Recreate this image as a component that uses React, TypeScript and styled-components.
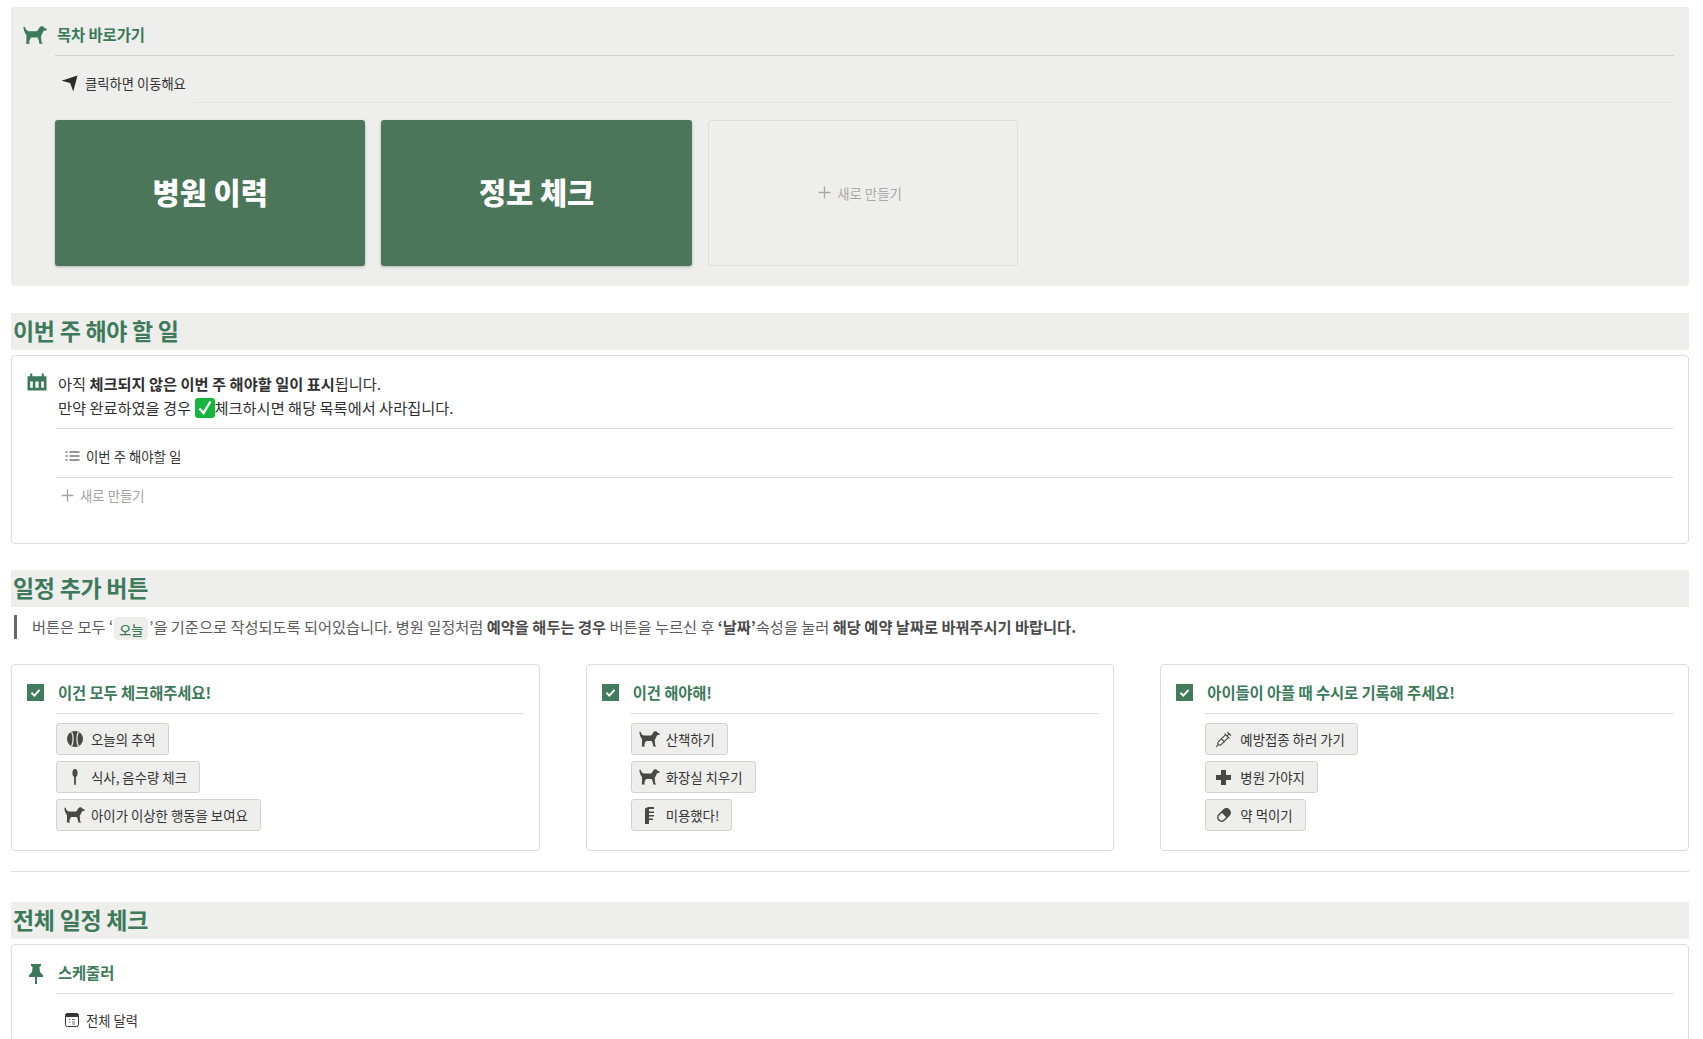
import styled, { createGlobalStyle } from "styled-components";
import { Syringe } from "lucide-react";

const GREEN = "#3c7a5a";
const PANEL = "#eeeeec";
const LINE = "#dcdcda";

const GlobalStyle = createGlobalStyle`
  html, body {
    margin: 0;
    padding: 0;
    background: #fff;
    font-family: "Noto Sans CJK KR", "Noto Sans", sans-serif;
    color: #2f2f2f;
  }
`;

const Page = styled.div`
  height: 1039px;
  overflow: hidden;
  padding: 7px 14px 0 11px;
  box-sizing: border-box;
`;

const TopPanel = styled.section`
  display: flex;
  height: 279px;
  box-sizing: border-box;
  padding: 10px 15px 20px 12px;
  background: ${PANEL};
  border-radius: 3px;
`;

const IconCol = styled.div<{ $top: number; $width?: number; $left?: number }>`
  flex: 0 0 ${(p) => p.$width ?? 29}px;
  display: flex;
  justify-content: flex-start;
  padding-top: ${(p) => p.$top}px;
  padding-left: ${(p) => p.$left ?? 0}px;
  box-sizing: border-box;
  color: ${GREEN};
`;

const Body = styled.div`
  flex: 1;
  min-width: 0;
  display: flex;
  flex-direction: column;
`;

const BlockTitle = styled.div`
  height: 39px;
  display: flex;
  align-items: center;
  flex: none;
  box-sizing: border-box;
  padding: 0 0 5px 2px;
  border-bottom: 1px solid #d0d0ce;
  color: ${GREEN};
  font-size: 15.4px;
  font-weight: 700;
  letter-spacing: -0.1px;
`;

const ViewRow = styled.div<{ $rule?: number; $inset: number; $top: number }>`
  height: 47px;
  box-sizing: border-box;
  display: flex;
  align-items: center;
  gap: 7px;
  padding: ${(p) => p.$top}px 0 0 ${(p) => p.$inset}px;
  font-size: 13.3px;
  color: #333;
  position: relative;
  flex: none;

  &::after {
    content: "";
    display: ${(p) => (p.$rule === undefined ? "none" : "block")};
    position: absolute;
    left: ${(p) => p.$rule ?? 0}px;
    right: 0;
    bottom: 0;
    height: 1px;
    background: #e4e4e2;
  }
`;

const LinkGrid = styled.div`
  display: grid;
  grid-template-columns: repeat(3, 310.4px);
  gap: 16px;
  margin-top: 17px;
  height: 146px;
`;

const LinkCard = styled.div`
  display: flex;
  align-items: center;
  justify-content: center;
  padding-bottom: 5px;
  background: #4c7659;
  border-radius: 3px;
  box-shadow: 0 1px 3px rgba(0, 0, 0, 0.25);
  color: #fff;
  font-size: 29.5px;
  font-weight: 900;
`;

const NewCard = styled.div`
  display: flex;
  align-items: center;
  justify-content: center;
  gap: 6px;
  padding: 0 6px 1px 0;
  border: 1px solid #dddddb;
  border-radius: 3px;
  color: #a9a9a7;
  font-size: 13.4px;
`;

const Heading = styled.h2<{ $top: number }>`
  margin: ${(p) => p.$top}px 0 0;
  height: 37px;
  line-height: 34px;
  padding-left: 2px;
  background: ${PANEL};
  color: ${GREEN};
  font-size: 23px;
  font-weight: 700;
  letter-spacing: -0.3px;
`;

const Box = styled.section<{ $height: number }>`
  display: flex;
  height: ${(p) => p.$height}px;
  margin-top: 5px;
  box-sizing: border-box;
  padding: 15px 15px 0;
  border: 1px solid ${LINE};
  border-radius: 4px;
`;

const Note = styled.p`
  margin: 0 0 0 2px;
  height: 57px;
  font-size: 15.25px;
  line-height: 24px;
  color: #2f2f2f;

  strong {
    font-weight: 700;
  }
`;

const NoteRule = styled.div`
  border-top: 1px solid ${LINE};
`;

const TableRow = styled.div`
  height: 49px;
  display: flex;
  align-items: center;
  gap: 6px;
  padding: 6px 0 0 9px;
  border-bottom: 1px solid ${LINE};
  box-sizing: border-box;
  font-size: 13.4px;
  color: #333;
`;

const AddRow = styled.div`
  height: 34px;
  display: flex;
  align-items: center;
  gap: 6px;
  padding-left: 5px;
  color: #a3a3a1;
  font-size: 13.4px;
`;

const Quote = styled.blockquote`
  margin: 8px 0 0 3px;
  height: 24px;
  box-sizing: border-box;
  padding: 0 0 2px 15px;
  border-left: 3px solid #666;
  display: flex;
  align-items: center;
  font-size: 15.25px;
  color: #5b5b5b;
  white-space: pre;

  strong {
    font-weight: 700;
    color: #4a4a4a;
  }
`;

const Chip = styled.span`
  display: inline-block;
  margin: 0 1px;
  padding: 2px 5px 0;
  height: 21px;
  line-height: 21px;
  background: ${PANEL};
  border-radius: 4px;
  color: ${GREEN};
  font-size: 13px;
  font-weight: 500;
  position: relative;
  top: 2px;
`;

const CalloutGrid = styled.div`
  display: grid;
  grid-template-columns: repeat(3, 1fr);
  gap: 46px;
  margin-top: 25px;
`;

const Callout = styled.div`
  display: flex;
  height: 187px;
  box-sizing: border-box;
  padding: 7px 15px 0;
  border: 1px solid ${LINE};
  border-radius: 4px;
`;

const CalloutTitle = styled(BlockTitle)`
  height: 42px;
  padding-bottom: 1px;
  border-color: ${LINE};
`;

const SchedulerTitle = styled(BlockTitle)`
  height: 41px;
  margin-top: -7px;
  padding-bottom: 3px;
  border-color: ${LINE};
`;

const Buttons = styled.div`
  display: flex;
  flex-direction: column;
  align-items: flex-start;
  gap: 6px;
  margin-top: 9px;
`;

const ActionButton = styled.div`
  height: 32px;
  box-sizing: border-box;
  display: flex;
  align-items: center;
  gap: 7px;
  padding: 0 12px 0 8px;
  background: ${PANEL};
  border: 1px solid #d2d2d0;
  border-radius: 3px;
  color: #333;
  font-size: 13.4px;
  white-space: nowrap;
`;

const IconSlot = styled.span`
  flex: 0 0 19px;
  width: 19px;
  min-width: 0;
  height: 20px;
  display: flex;
  align-items: center;
  justify-content: center;
  color: #484848;

  svg {
    flex: none;
  }
`;

const Rule = styled.hr`
  margin: 20px 0 0;
  border: none;
  border-top: 1px solid ${LINE};
`;

const EmojiSvg = styled.svg`
  vertical-align: -4px;
`;

const DOG =
  "M0.4 0.8L1.8 0.8C2.4 3 3.4 4.6 5.6 5.2L13.6 5.2C15 4.6 15.6 2.6 16.6 1.2C17.4 0.2 19 -0.1 20 0.6L21 1.6L23.8 3L23.4 4.4L20.8 4.8C19.8 6.4 19.2 8.4 18 10L18.4 15.6L19.8 17.8L16.4 17.8L15.8 14.6L14.6 11.4L8 11.4L6.4 14.6L6.2 16.2L7 17.8L3 17.8L3.4 15.6L3.4 9.2C1.6 7 0.6 4 0.4 0.8Z";

function Dog({ size = 21 }: { size?: number }) {
  return (
    <svg width={size} height={(size * 18) / 24} viewBox="0 0 24 18" fill="currentColor">
      <path d={DOG} />
    </svg>
  );
}

function Arrow() {
  return (
    <svg width="17" height="17" viewBox="0 0 16 16" fill="#2b2b2b">
      <path d="M15.5 0.5L11.5 15.5L8.6 7.5L0.5 5.5Z" />
    </svg>
  );
}

function Plus({ size = 13 }: { size?: number }) {
  return (
    <svg width={size} height={size} viewBox="0 0 12 12" stroke="currentColor" strokeWidth="1.2">
      <path d="M6 0.5V11.5M0.5 6H11.5" />
    </svg>
  );
}

function CalendarSolid() {
  return (
    <svg width="20" height="18" viewBox="0 0 19 17">
      <path
        fill={GREEN}
        d="M0.5 3H3V0.5H5V3H14V0.5H16V3H18.5V16.5H0.5ZM3 8V14H5.5V8ZM8 8V14H11V8ZM13.5 8V14H16V8Z"
        fillRule="evenodd"
      />
    </svg>
  );
}

function CheckSquare() {
  return (
    <svg width="17" height="17" viewBox="0 0 17 17">
      <rect width="17" height="17" fill="#427c5c" />
      <path d="M4.5 8.8L7.4 11.6L12.5 5.8" fill="none" stroke="#fff" strokeWidth="1.9" />
    </svg>
  );
}

function EmojiCheck() {
  return (
    <EmojiSvg width="20" height="20" viewBox="0 0 20 20">
      <rect width="20" height="20" rx="3" fill="#16b53d" />
      <path d="M4.5 10.5L8.5 15L15.5 3.5" fill="none" stroke="#fff" strokeWidth="2.4" />
    </EmojiSvg>
  );
}

function ListIcon() {
  return (
    <svg width="15" height="12" viewBox="0 0 14 12" stroke="#333" strokeWidth="1.2">
      <path d="M0 2H2M4 2H14M0 6H2M4 6H14M0 10H2M4 10H14" />
    </svg>
  );
}

function Ball() {
  return (
    <svg width="16" height="16" viewBox="0 0 16 16">
      <circle cx="8" cy="8" r="8" fill="currentColor" />
      <path
        d="M4.7 1C6.3 5 6.3 11 4.7 15M11.3 1C9.7 5 9.7 11 11.3 15"
        fill="none"
        stroke="#eeeeec"
        strokeWidth="1.2"
      />
    </svg>
  );
}

function Spoon() {
  return (
    <svg width="6" height="16" viewBox="0 0 6 16" fill="currentColor">
      <ellipse cx="3" cy="4" rx="2.6" ry="4" />
      <rect x="2.1" y="6" width="1.8" height="10" rx="0.9" />
    </svg>
  );
}

function Comb() {
  return (
    <svg width="9" height="17" viewBox="0 0 9 17" fill="currentColor">
      <path d="M0 1.5L3 0H9V2H4V4.5H9V6H4V8H9V9.5H4V11.5H8V13H4V17H0Z" />
    </svg>
  );
}

function Cross() {
  return (
    <svg width="15" height="15" viewBox="0 0 15 15" fill="currentColor">
      <path d="M5 0H10V5H15V10H10V15H5V10H0V5H5Z" />
    </svg>
  );
}

function Pill() {
  return (
    <svg width="16" height="16" viewBox="0 0 16 16">
      <g transform="rotate(-45 8 8)">
        <rect x="0.8" y="4.2" width="14.4" height="7.6" rx="3.8" fill="#eeeeec" stroke="currentColor" strokeWidth="1.5" />
        <path d="M8 4.2H11.4A3.8 3.8 0 0 1 11.4 11.8H8Z" fill="currentColor" />
      </g>
    </svg>
  );
}

function Pin() {
  return (
    <svg width="14" height="20" viewBox="0 0 14 20" fill={GREEN}>
      <path d="M2 0H12V2L10.4 3L11 8L14 11V13H8V20H6V13H0V11L3 8L3.6 3L2 2Z" />
    </svg>
  );
}

function SmallCalendar() {
  return (
    <svg width="14" height="14" viewBox="0 0 14 14">
      <rect x="0.5" y="0.5" width="13" height="13" rx="2" fill="#fff" stroke="#333" />
      <rect x="0.5" y="0.5" width="13" height="3.5" rx="1.5" fill="#333" />
      <path d="M4 6.5h1.5M7 6.5h3M4 9h1.5M7 9h3M7 11h3" stroke="#777" strokeWidth="1" />
    </svg>
  );
}

const callouts = [
  {
    title: "이건 모두 체크해주세요!",
    buttons: [
      { icon: <Ball />, label: "오늘의 추억" },
      { icon: <Spoon />, label: "식사, 음수량 체크" },
      { icon: <Dog />, label: "아이가 이상한 행동을 보여요" },
    ],
  },
  {
    title: "이건 해야해!",
    buttons: [
      { icon: <Dog />, label: "산책하기" },
      { icon: <Dog />, label: "화장실 치우기" },
      { icon: <Comb />, label: "미용했다!" },
    ],
  },
  {
    title: "아이들이 아플 때 수시로 기록해 주세요!",
    buttons: [
      { icon: <Syringe size={17} strokeWidth={1.6} />, label: "예방접종 하러 가기" },
      { icon: <Cross />, label: "병원 가야지" },
      { icon: <Pill />, label: "약 먹이기" },
    ],
  },
];

export default function App() {
  return (
    <Page>
      <GlobalStyle />
      <TopPanel>
        <IconCol $top={9} $width={32}>
          <Dog size={24} />
        </IconCol>
        <Body>
          <BlockTitle>목차 바로가기</BlockTitle>
          <ViewRow $rule={138} $inset={6} $top={8}>
            <Arrow />
            클릭하면 이동해요
          </ViewRow>
          <LinkGrid>
            <LinkCard>병원 이력</LinkCard>
            <LinkCard>정보 체크</LinkCard>
            <NewCard>
              <Plus />
              새로 만들기
            </NewCard>
          </LinkGrid>
        </Body>
      </TopPanel>

      <Heading $top={27}>이번 주 해야 할 일</Heading>
      <Box $height={189}>
        <IconCol $top={2}>
          <CalendarSolid />
        </IconCol>
        <Body>
          <Note>
            아직 <strong>체크되지 않은 이번 주 해야할 일이 표시</strong>됩니다.
            <br />
            만약 완료하였을 경우 <EmojiCheck />체크하시면 해당 목록에서 사라집니다.
          </Note>
          <NoteRule />
          <TableRow>
            <ListIcon />
            이번 주 해야할 일
          </TableRow>
          <AddRow>
            <Plus />
            새로 만들기
          </AddRow>
        </Body>
      </Box>

      <Heading $top={26}>일정 추가 버튼</Heading>
      <Quote>
        버튼은 모두 ‘<Chip>오늘</Chip>’을 기준으로 작성되도록 되어있습니다. 병원 일정처럼{" "}
        <strong>예약을 해두는 경우</strong> 버튼을 누르신 후 <strong>‘날짜’</strong>속성을 눌러{" "}
        <strong>해당 예약 날짜로 바꿔주시기 바랍니다.</strong>
      </Quote>

      <CalloutGrid>
        {callouts.map((c) => (
          <Callout key={c.title}>
            <IconCol $top={12}>
              <CheckSquare />
            </IconCol>
            <Body>
              <CalloutTitle>{c.title}</CalloutTitle>
              <Buttons>
                {c.buttons.map((b) => (
                  <ActionButton key={b.label}>
                    <IconSlot>{b.icon}</IconSlot>
                    {b.label}
                  </ActionButton>
                ))}
              </Buttons>
            </Body>
          </Callout>
        ))}
      </CalloutGrid>

      <Rule />

      <Heading $top={30}>전체 일정 체크</Heading>
      <Box $height={200}>
        <IconCol $top={4} $left={2}>
          <Pin />
        </IconCol>
        <Body>
          <SchedulerTitle>스케줄러</SchedulerTitle>
          <ViewRow $inset={9} $top={5}>
            <SmallCalendar />
            전체 달력
          </ViewRow>
        </Body>
      </Box>
    </Page>
  );
}
